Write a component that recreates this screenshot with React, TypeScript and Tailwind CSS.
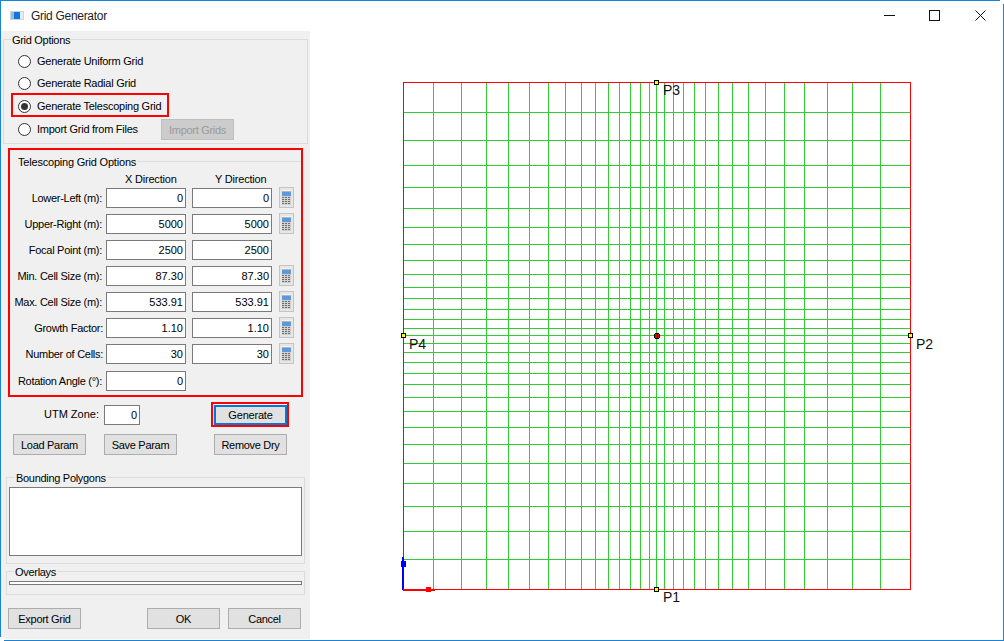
import React from "react";

const vx = [433,461,486,508,529,548,565,581,595,608,619,630,640,649,656,664,673,683,694,705,718,732,748,765,784,804,827,852,880];
const hy = [112,140,165,187,208,227,244,260,274,287,298,309,319,328,335,343,352,362,373,384,397,411,427,444,463,483,506,531,559];

function Calc() {
  return (
    <svg width="15" height="21" viewBox="0 0 15 21" className="block" shapeRendering="crispEdges">
      <rect x="0" y="0" width="15" height="21" fill="#c4c4c4" />
      <rect x="1" y="1" width="13" height="19" fill="#e6e6e6" />
      <rect x="3" y="3" width="9" height="15" fill="#b4b4b4" />
      <rect x="3" y="3" width="9" height="1" fill="#f4f4f4" />
      <rect x="3" y="5" width="9" height="4" fill="#5b9bdc" />
      <rect x="3" y="9" width="9" height="9" fill="#d0d0d0" />
      {[10, 12, 14, 16].map((y) =>
        [3, 6, 9].map((x) => (
          <rect key={`${x}-${y}`} x={x} y={y} width="2" height="1" fill={x === 9 && y === 10 ? "#c85050" : "#6c6c6c"} />
        ))
      )}
    </svg>
  );
}

function Field({ value, w = "w-20" }: { value: string; w?: string }) {
  return (
    <div className={`${w} h-5 border border-[#7a7a7a] bg-white text-right pr-[2px] text-[11px] leading-[18px] text-black`}>
      {value}
    </div>
  );
}

function Btn({ label, disabled }: { label: string; disabled?: boolean }) {
  return (
    <div className={`w-[73px] h-[21px] border text-center whitespace-nowrap text-[11px] tracking-[-0.3px] leading-[20px] ${disabled ? "text-[#9a9a9a] bg-[#cccccc] border-[#bfbfbf]" : "text-black bg-[#e1e1e1] border-[#adadad]"}`}>
      {label}
    </div>
  );
}

function Radio({ checked }: { checked?: boolean }) {
  return (
    <span className="w-[13px] h-[13px] rounded-full border border-[#333333] bg-white flex items-center justify-center shrink-0">
      {checked && <span className="w-[7px] h-[7px] rounded-full bg-[#333333]" />}
    </span>
  );
}

function Row({ label, x, y, calc, mt, pr = "pr-px" }: { label: string; x: string; y?: string; calc?: boolean; mt: string; pr?: string }) {
  return (
    <div className={`flex items-center h-5 ${mt}`}>
      <div className={`w-[93px] text-right text-[11px] tracking-[-0.28px] whitespace-nowrap text-black ${pr}`}>{label}</div>
      <div className="ml-[3px]"><Field value={x} /></div>
      {y && <div className="ml-[6px]"><Field value={y} /></div>}
      {calc && <div className="ml-[7px] self-start -mt-px"><Calc /></div>}
    </div>
  );
}

function GridCanvas() {
  return (
    <svg width="693" height="609" viewBox="310 31 693 609" className="block" shapeRendering="crispEdges">
      {vx.map((x) => (
        <line key={x} x1={x + 0.5} x2={x + 0.5} y1={82} y2={590} stroke="#32cd32" />
      ))}
      {hy.map((y) => (
        <line key={y} x1={403} x2={911} y1={y + 0.5} y2={y + 0.5} stroke="#32cd32" />
      ))}
      <rect x="403.5" y="82.5" width="507" height="507" fill="none" stroke="#ff0000" />
      {[[656, 82], [403, 335], [910, 335], [656, 589]].map(([x, y]) => (
        <rect key={`${x}-${y}`} x={x - 1.5} y={y - 1.5} width="4" height="4" fill="#ffff00" stroke="#000000" />
      ))}
      <rect x="655" y="333" width="4" height="6" fill="#000000" />
      <rect x="654" y="334" width="6" height="4" fill="#000000" />
      <rect x="655" y="334" width="4" height="4" fill="#e00000" />
      <rect x="657" y="334" width="1" height="4" fill="#400000" />
      <rect x="402" y="557" width="2" height="33" fill="#0000ff" />
      <rect x="401" y="561" width="5" height="6" fill="#0000ff" />
      <rect x="403" y="589" width="32" height="2" fill="#ff0000" />
      <rect x="426" y="587" width="5" height="5" fill="#ff0000" />
      <g fontFamily="'Liberation Sans',sans-serif" fontSize="14" fill="#111111" style={{ shapeRendering: "auto" }}>
        <text x="663" y="95">P3</text>
        <text x="409" y="349">P4</text>
        <text x="916" y="349">P2</text>
        <text x="663" y="602">P1</text>
      </g>
    </svg>
  );
}

export default function App() {
  return (
    <div className="w-[1004px] h-[641px] bg-white relative flex flex-col border border-[#1883d7] [font-family:'Liberation_Sans',Arial,sans-serif]">
      <div className="h-[30px] flex items-center shrink-0">
        <svg width="14" height="9" viewBox="0 0 14 9" className="ml-[9px] mb-[1px]" shapeRendering="crispEdges">
          <rect width="14" height="9" fill="#c9d4e0" />
          <rect x="1" y="1" width="3" height="7" fill="#a0b8d0" />
          <rect x="4" y="1" width="6" height="7" fill="#0a78e0" />
          <rect x="10" y="1" width="3" height="7" fill="#e6ecf2" />
        </svg>
        <span className="ml-[7px] text-[12px] tracking-[-0.3px] text-[#222222]">Grid Generator</span>
        <div className="ml-auto flex items-center mb-[2px]">
          <svg width="11" height="11" viewBox="0 0 11 11" shapeRendering="crispEdges"><rect x="0" y="5" width="11" height="1" fill="#111111" /></svg>
          <svg width="11" height="11" viewBox="0 0 11 11" className="ml-[34px]" shapeRendering="crispEdges"><rect x="0.5" y="0.5" width="10" height="10" fill="none" stroke="#111111" /></svg>
          <svg width="11" height="11" viewBox="0 0 11 11" className="ml-[35px] mr-[17px]"><path d="M0.5 0.5 L10.5 10.5 M10.5 0.5 L0.5 10.5" stroke="#111111" strokeWidth="1" /></svg>
        </div>
      </div>
      <div className="flex-1 flex min-h-0">
        <div className="w-[309px] bg-[#f0f0f0] shrink-0 flex flex-col mb-px">
          {/* Grid Options */}
          <div className="mt-[8px] ml-[2px] w-[305px] h-[105px] border border-[#dcdcdc] relative shrink-0">
            <span className="absolute -top-[8px] left-[7px] bg-[#f0f0f0] px-px text-[11px] tracking-[-0.3px] leading-4 text-black">Grid Options</span>
            <div className="pl-[14px] pt-[10px] flex flex-col text-[11px] tracking-[-0.25px] text-black">
              <div className="h-[22px] flex items-center gap-[6px]"><Radio /><span>Generate Uniform Grid</span></div>
              <div className="h-[22px] flex items-center gap-[6px]"><Radio /><span>Generate Radial Grid</span></div>
              <div className="h-[24px] flex items-center gap-[6px] relative">
                <span className="absolute -left-[7px] -top-[1px] w-[158px] h-[24px] border-2 border-[#ff0000]" />
                <Radio checked /><span>Generate Telescoping Grid</span>
              </div>
              <div className="h-[23px] flex items-center">
                <div className="w-[143px] flex items-center gap-[6px]"><Radio /><span>Import Grid from Files</span></div>
                <Btn label="Import Grids" disabled />
              </div>
            </div>
          </div>
          {/* Telescoping */}
          <div className="mt-[4px] ml-[7px] w-[295px] h-[249px] border-2 border-[#ff0000] relative shrink-0">
            <div className="absolute left-[6px] right-0 top-[11px] h-px bg-[#dcdcdc]" />
            <span className="absolute top-[4px] left-[7px] bg-[#f0f0f0] px-px text-[11px] tracking-[-0.2px] leading-4 text-black">Telescoping Grid Options</span>
            <div className="pt-[21px] flex flex-col">
              <div className="flex h-[16px] text-[11px] tracking-[-0.2px] leading-4 text-black">
                <span className="ml-[115px] w-[90px]">X Direction</span>
                <span>Y Direction</span>
              </div>
              <Row label="Lower-Left (m):" x="0" y="0" calc mt="mt-[1px]" />
              <Row label="Upper-Right (m):" x="5000" y="5000" calc mt="mt-[6px]" />
              <Row label="Focal Point (m):" x="2500" y="2500" mt="mt-[6px]" />
              <Row label="Min. Cell Size (m):" x="87.30" y="87.30" calc mt="mt-[6px]" />
              <Row label="Max. Cell Size (m):" x="533.91" y="533.91" calc mt="mt-[6px]" />
              <Row label="Growth Factor:" x="1.10" y="1.10" calc mt="mt-[6px]" pr="pr-0" />
              <Row label="Number of Cells:" x="30" y="30" calc mt="mt-[6px]" pr="pr-0" />
              <Row label="Rotation Angle (°):" x="0" mt="mt-[7px]" />
            </div>
          </div>
          {/* UTM */}
          <div className="flex items-center h-[25px] mt-[5px] shrink-0">
            <span className="w-[98px] text-right text-[11px] text-black">UTM Zone:</span>
            <div className="ml-[5px]"><Field value="0" w="w-[36px]" /></div>
            <div className="ml-[71px] w-[78px] h-[25px] border-2 border-[#ff0000] shrink-0">
              <div className="ml-px mt-px w-[73px] h-[20px] border-2 border-[#0078d7] bg-[#e1e1e1] text-center text-[11px] tracking-[-0.2px] leading-[17px] text-black">Generate</div>
            </div>
          </div>
          <div className="flex mt-[7px] ml-[12px] shrink-0">
            <Btn label="Load Param" />
            <div className="ml-[18px]"><Btn label="Save Param" /></div>
            <div className="ml-[37px]"><Btn label="Remove Dry" /></div>
          </div>
          {/* Bounding */}
          <div className="mt-[22px] ml-[5px] w-[299px] h-[87px] border border-[#dcdcdc] relative shrink-0">
            <span className="absolute -top-[8px] left-[8px] bg-[#f0f0f0] px-px text-[11px] tracking-[-0.3px] leading-4 text-black">Bounding Polygons</span>
            <div className="mx-[2px] mt-[9px] h-[69px] border border-[#7a7a7a] bg-white" />
          </div>
          <div className="mt-[7px] ml-[5px] w-[299px] h-[24px] border border-[#dcdcdc] relative shrink-0">
            <span className="absolute -top-[8px] left-[7px] bg-[#f0f0f0] px-px text-[11px] tracking-[-0.3px] leading-4 text-black">Overlays</span>
            <div className="mx-[2px] mt-[9px] h-[4px] border border-[#7a7a7a] bg-white" />
          </div>
          <div className="flex mt-[13px] ml-[7px] shrink-0">
            <Btn label="Export Grid" />
            <div className="ml-[66px]"><Btn label="OK" /></div>
            <div className="ml-[8px]"><Btn label="Cancel" /></div>
          </div>
        </div>
        <div className="flex-1 min-w-0">
          <GridCanvas />
        </div>
      </div>
      <div className="absolute -top-px -right-px w-1 h-1 bg-white" />
      <div className="absolute -bottom-px -left-px w-1 h-1 bg-white" />
    </div>
  );
}
